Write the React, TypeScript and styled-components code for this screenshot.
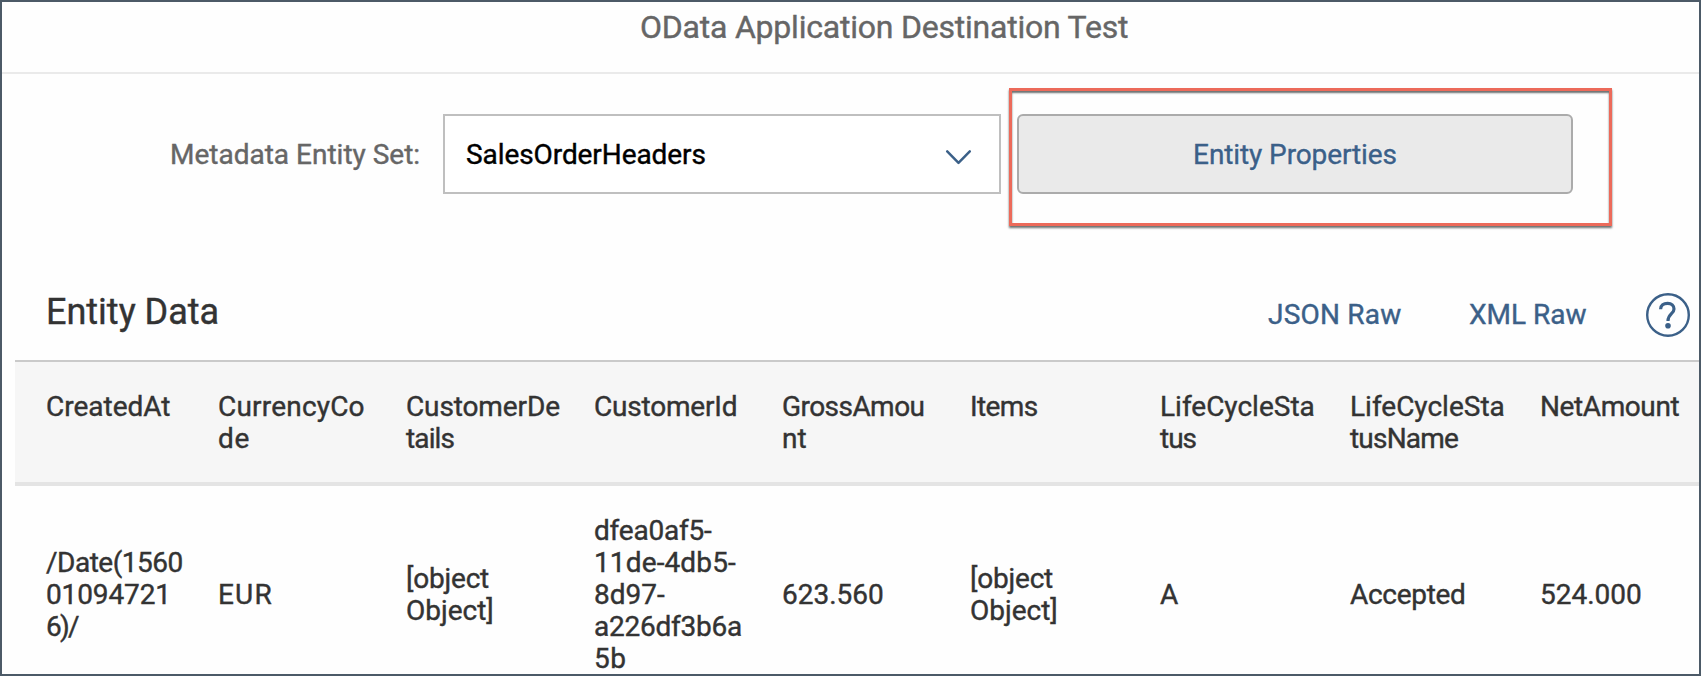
import React from "react";
import styled, { createGlobalStyle } from "styled-components";

const GlobalStyle = createGlobalStyle`
  *, *::before, *::after { box-sizing: border-box; }
  body { margin: 0; background: #fff; }
  button { font: inherit; background: none; border: 0; padding: 0; margin: 0; }
`;

const Page = styled.div`
  width: 1701px;
  height: 676px;
  border: 2px solid #4c5a67;
  background: #fefefe;
  color: #333;
  font: 400 28px/32px Roboto, "Liberation Sans", sans-serif;
  -webkit-text-stroke: 0.4px currentColor;
  overflow: hidden;
`;

const TitleBar = styled.header`
  height: 72px;
  border-bottom: 2px solid #eaeaea;
  padding: 5px 0 0 638px;
`;

const Title = styled.h1`
  margin: 0;
  font-size: 32px;
  line-height: 40px;
  font-weight: 400;
  letter-spacing: -0.22px;
  color: #666;
`;

const FilterRow = styled.section`
  display: flex;
  align-items: flex-start;
  height: 216px;
  padding: 14px 87px 0 168px;
`;

const FieldLabel = styled.label`
  width: 273px;
  padding-top: 51px;
  color: #666;
`;

const Select = styled.div`
  display: flex;
  align-items: center;
  justify-content: space-between;
  width: 558px;
  height: 80px;
  margin-top: 26px;
  padding: 2px 27px 0 21px;
  border: 2px solid #bfbfbf;
  background: #fff;
  color: #000;
  letter-spacing: -0.08px;
`;

const Chevron = styled.svg`
  width: 27px;
  height: 18px;
  margin-top: 4px;
`;

const Highlight = styled.div`
  width: 603px;
  height: 138px;
  margin-left: 8px;
  padding: 23px 0 0 5px;
  border: 3px solid #ec6a5a;
  box-shadow: 0 2px 2px #6c7070, inset 0 2px 2px #6c7070;
`;

const EntityButton = styled.button`
  display: block;
  width: 556px;
  height: 80px;
  padding-top: 2px;
  border: 2px solid #ababab;
  border-radius: 6px;
  background: #eaeaea;
  color: #3b6088;
  letter-spacing: -0.1px;
  text-shadow: 0 0 2px #fff;
`;

const Toolbar = styled.div`
  display: flex;
  height: 70px;
  padding: 0 9px 0 44px;
`;

const SectionTitle = styled.h2`
  flex: 1;
  margin: 0;
  padding-top: 1px;
  font-size: 36px;
  line-height: 42px;
  font-weight: 400;
`;

const LinkButton = styled.button<{ $width: number; $track: number }>`
  width: ${(p) => p.$width}px;
  letter-spacing: ${(p) => p.$track}px;
  height: 32px;
  margin-top: 9px;
  color: #3b6088;
  text-align: left;
  white-space: nowrap;
`;

const HelpButton = styled.button`
  width: 44px;
  height: 44px;
  margin-top: 3px;
  svg { display: block; }
`;

const Table = styled.div`
  margin-left: 13px;
`;

const Row = styled.div<{ $head?: boolean }>`
  display: grid;
  grid-template-columns: 172px repeat(4, 188px) repeat(3, 190px) 1fr;
  align-items: ${(p) => (p.$head ? "start" : "center")};
  padding: 29px 0 28px;
  ${(p) =>
    p.$head &&
    `
    height: 126px;
    border-top: 2px solid #cacaca;
    border-bottom: 4px solid #e4e4e4;
    background: #f6f6f6;
  `}
`;

const Cell = styled.div`
  padding-left: 31px;
  white-space: nowrap;
`;

const Line = styled.div<{ $track: number }>`
  letter-spacing: ${(p) => p.$track}px;
`;

type CellLine = [text: string, tracking: number];

const headers: CellLine[][] = [
  [["CreatedAt", 0]],
  [["CurrencyCo", 0.2], ["de", 0.7]],
  [["CustomerDe", -0.12], ["tails", -0.88]],
  [["CustomerId", -0.2]],
  [["GrossAmou", -0.55], ["nt", 0]],
  [["Items", -0.6]],
  [["LifeCycleSta", 0], ["tus", -1]],
  [["LifeCycleSta", 0], ["tusName", -0.8]],
  [["NetAmount", -0.4]],
];

const entity: CellLine[][] = [
  [["/Date(1560", -0.5], ["01094721", -0.12], ["6)/", -1.8]],
  [["EUR", 1.2]],
  [["[object", -0.2], ["Object]", 0]],
  [["dfea0af5-", -0.2], ["11de-4db5-", 0.13], ["8d97-", 0], ["a226df3b6a", -0.24], ["5b", 0.4]],
  [["623.560", 0]],
  [["[object", -0.2], ["Object]", 0]],
  [["A", 0]],
  [["Accepted", -0.3]],
  [["524.000", 0]],
];

function Cells({ cells }: { cells: CellLine[][] }) {
  return (
    <>
      {cells.map((lines, i) => (
        <Cell key={i}>
          {lines.map(([text, track]) => (
            <Line key={text} $track={track}>{text}</Line>
          ))}
        </Cell>
      ))}
    </>
  );
}

export default function App() {
  return (
    <>
      <GlobalStyle />
      <Page>
        <TitleBar>
          <Title>OData Application Destination Test</Title>
        </TitleBar>
        <FilterRow>
          <FieldLabel>Metadata Entity Set:</FieldLabel>
          <Select>
            SalesOrderHeaders
            <Chevron viewBox="0 0 27 18" fill="none" stroke="#3b6088" strokeWidth="2.5" strokeLinecap="round" strokeLinejoin="round">
              <path d="M2.2 3.4 13.5 14.8 24.8 3.4" />
            </Chevron>
          </Select>
          <Highlight>
            <EntityButton>Entity Properties</EntityButton>
          </Highlight>
        </FilterRow>
        <Toolbar>
          <SectionTitle>Entity Data</SectionTitle>
          <LinkButton $width={201} $track={0.2}>JSON Raw</LinkButton>
          <LinkButton $width={177} $track={0}>XML Raw</LinkButton>
          <HelpButton aria-label="Help">
            <svg width="44" height="44" viewBox="0 0 44 44" fill="none" stroke="#3b6088">
              <circle cx="22" cy="22" r="20.8" strokeWidth="2.4" />
              <path d="M14.6 16.2C14.6 12.4 17.6 10.3 21.6 10.3S28 12.6 28 16C28 21 22 20.6 22 28" strokeWidth="3.2" />
              <circle cx="22" cy="32.8" r="2.8" fill="#3b6088" stroke="none" />
            </svg>
          </HelpButton>
        </Toolbar>
        <Table>
          <Row $head>
            <Cells cells={headers} />
          </Row>
          <Row>
            <Cells cells={entity} />
          </Row>
        </Table>
      </Page>
    </>
  );
}
